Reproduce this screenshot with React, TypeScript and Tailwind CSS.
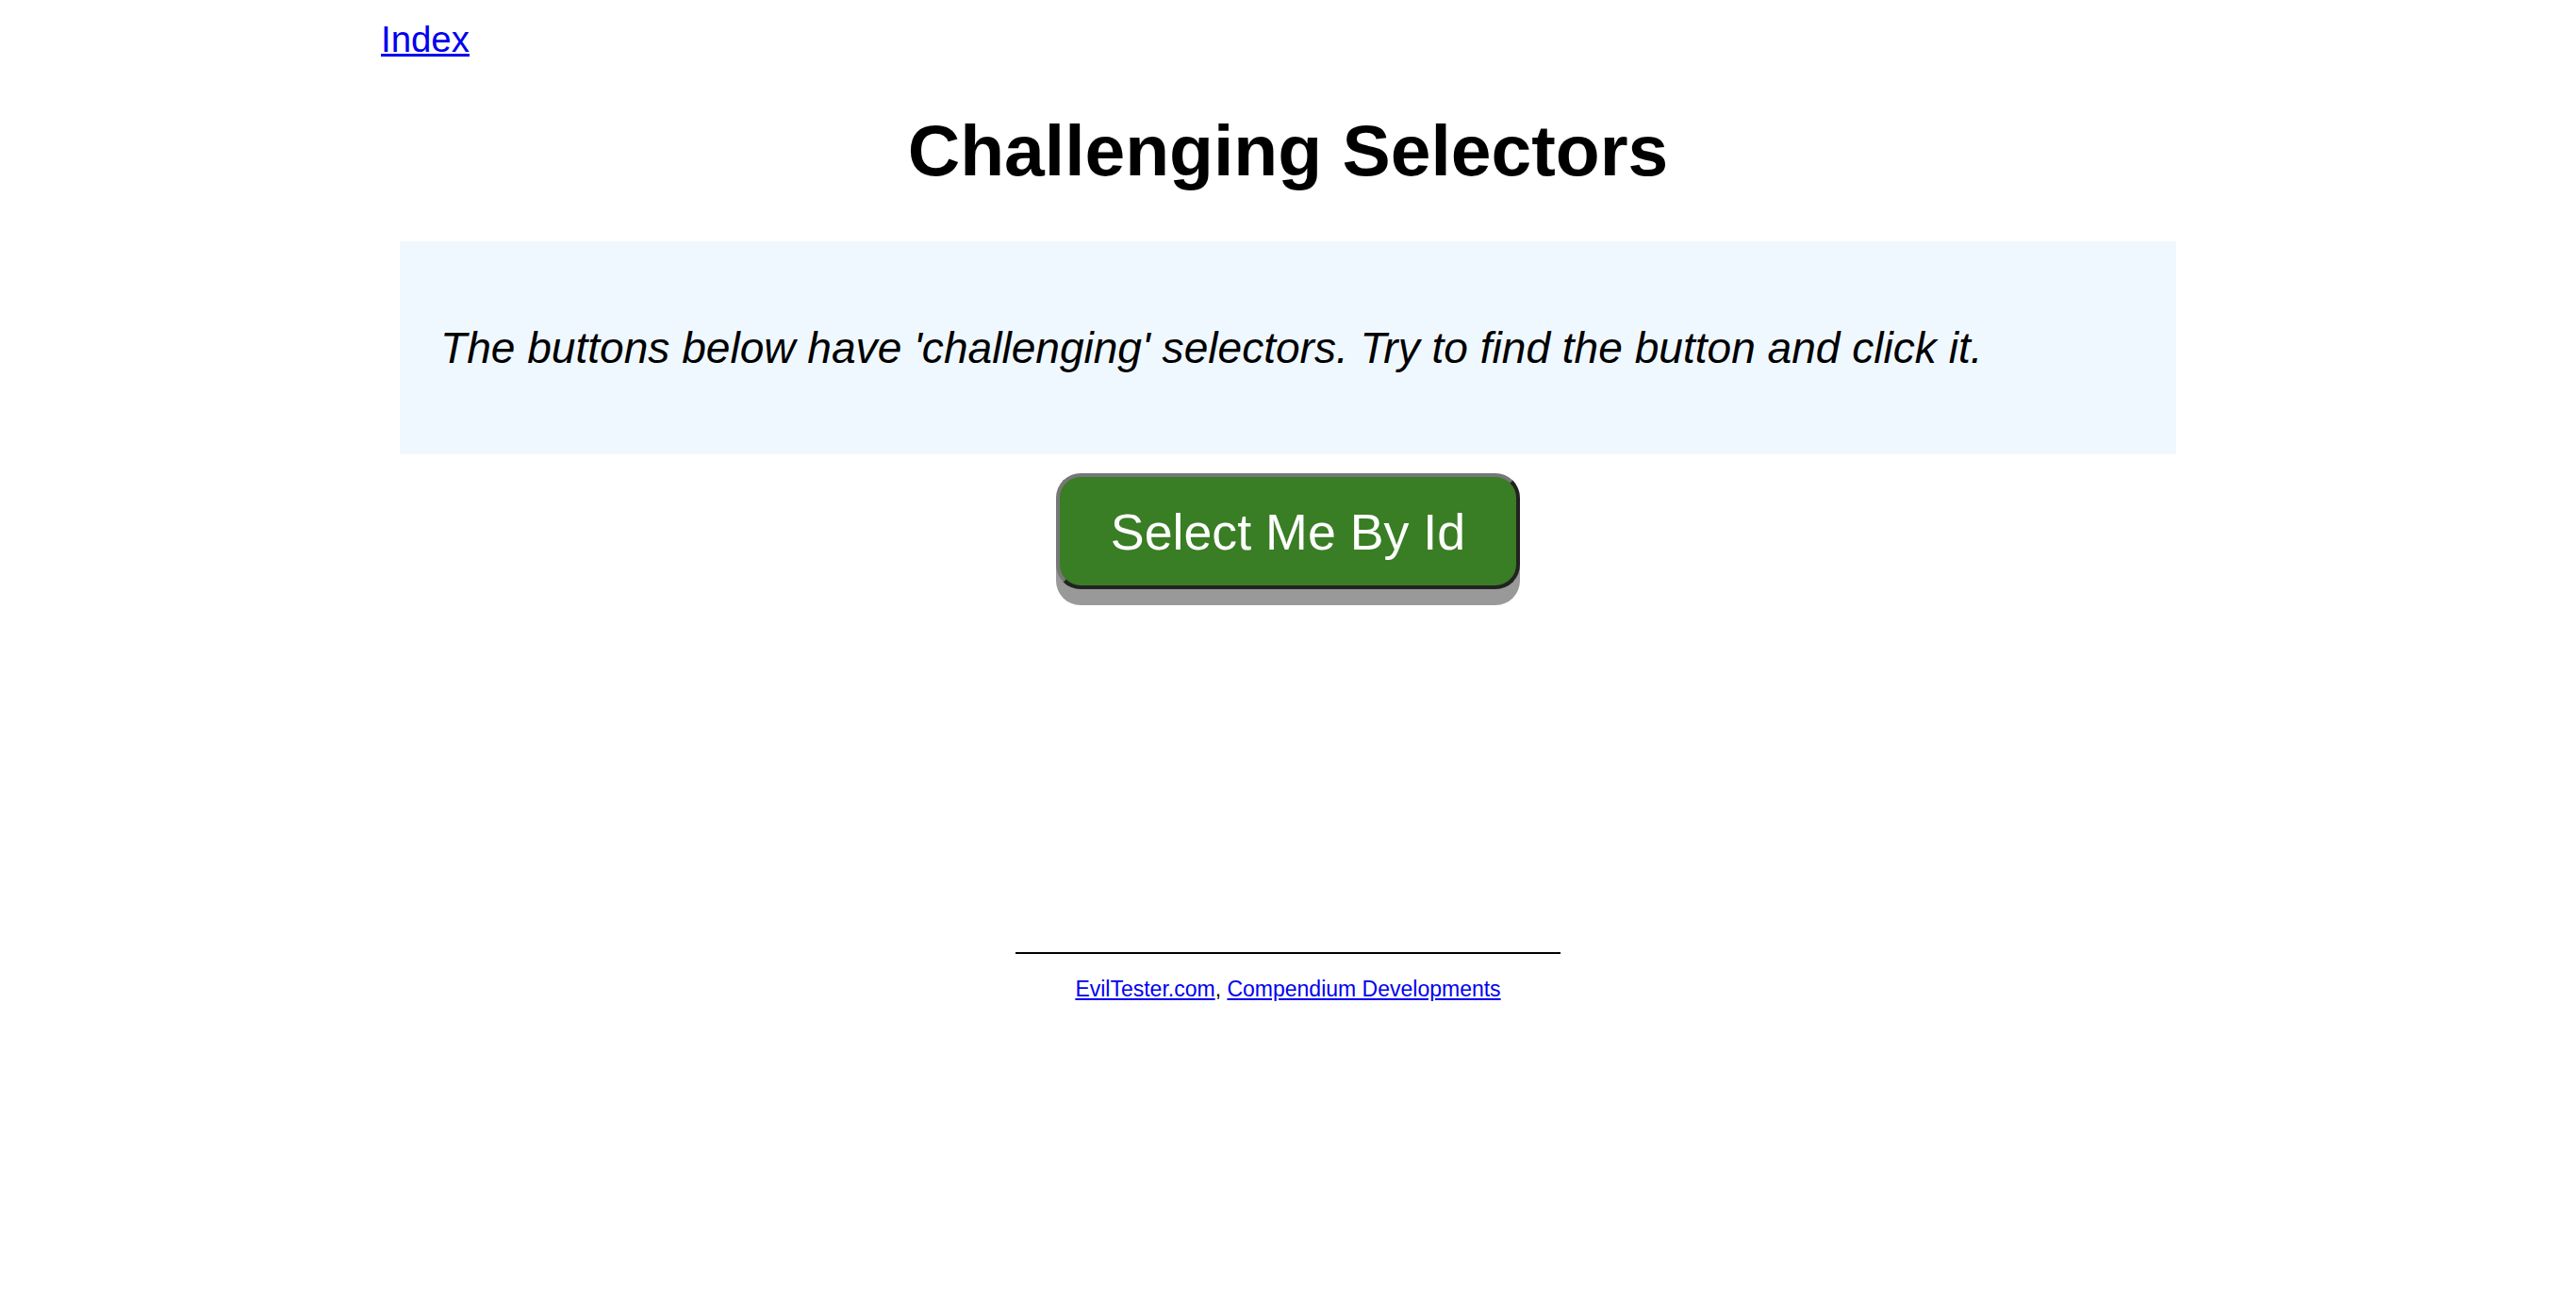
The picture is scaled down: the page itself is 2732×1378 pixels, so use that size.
export default function App() {
  return (
    <div className="min-h-[1378px] bg-white font-['Liberation_Sans',Arial,sans-serif] text-black">
      <div className="mx-auto w-[1924px] pt-[20px]">
        <div className="h-[44px] text-[38.4px] leading-[44px]">
          <a href="#" className="text-[#0000ee] underline">
            Index
          </a>
        </div>

        <h1 className="mt-[52px] mb-[54px] text-center text-[76.8px] font-bold leading-[86px]">
          Challenging Selectors
        </h1>

        <div className="mx-[20px] h-[226px] bg-[#f0f8ff] px-[43px] pt-[87px]">
          <p className="text-[46.08px] italic leading-[53px]">
            The buttons below have 'challenging' selectors. Try to find the button and click it.
          </p>
        </div>

        <div className="mt-[20px] flex justify-center">
          <button
            id="selectMeById"
            className="flex h-[123px] w-[492px] items-center justify-center rounded-[26px] border-[4px] border-t-[#777777] border-l-[#777777] border-r-[#222222] border-b-[#222222] bg-[#397d24] text-[53.76px] leading-[62px] text-white shadow-[0_17px_0_#999999]"
          >
            Select Me By Id
          </button>
        </div>

        <footer className="mt-[385px] flex flex-col items-center">
          <hr className="w-[578px] border-t-[2px] border-black" />
          <p className="mt-[24px] text-[23px] leading-[27px]">
            <a href="#" className="text-[#0000ee] underline">
              EvilTester.com
            </a>
            ,{" "}
            <a href="#" className="text-[#0000ee] underline">
              Compendium Developments
            </a>
          </p>
        </footer>
      </div>
    </div>
  );
}
